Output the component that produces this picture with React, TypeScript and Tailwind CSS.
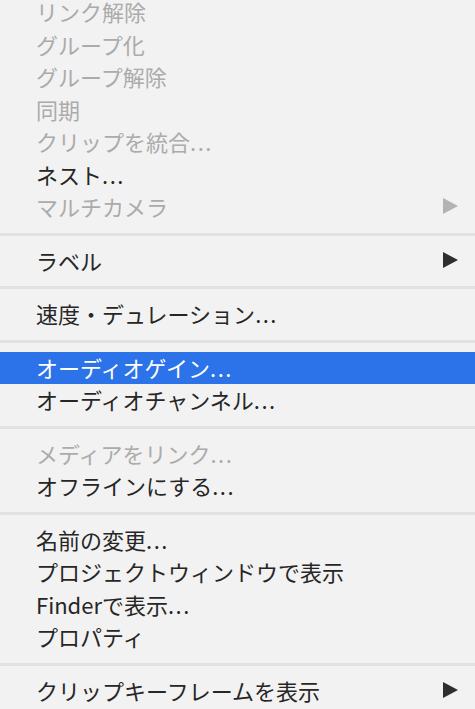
import React from "react";

type Item = { label: string; disabled?: boolean; sub?: boolean; active?: boolean };

const groups: Item[][] = [
  [
    { label: "リンク解除", disabled: true },
    { label: "グループ化", disabled: true },
    { label: "グループ解除", disabled: true },
    { label: "同期", disabled: true },
    { label: "クリップを統合...", disabled: true },
    { label: "ネスト..." },
    { label: "マルチカメラ", disabled: true, sub: true },
  ],
  [{ label: "ラベル", sub: true }],
  [{ label: "速度・デュレーション..." }],
  [{ label: "オーディオゲイン...", active: true }, { label: "オーディオチャンネル..." }],
  [{ label: "メディアをリンク...", disabled: true }, { label: "オフラインにする..." }],
  [
    { label: "名前の変更..." },
    { label: "プロジェクトウィンドウで表示" },
    { label: "Finderで表示..." },
    { label: "プロパティ" },
  ],
  [{ label: "クリップキーフレームを表示", sub: true }],
];

const Arrow = ({ color }: { color: string }) => (
  <svg width="15" height="16" viewBox="0 0 15 16">
    <polygon points="0,0 15,8 0,16" fill={color} />
  </svg>
);

// split trailing "..." so the dots can be spaced like the mac menu
const Label = ({ text }: { text: string }) => {
  if (!text.endsWith("...")) return <>{text}</>;
  return (
    <>
      {text.slice(0, -3)}
      <span className="tracking-[1.5px]">...</span>
    </>
  );
};

const Row = ({ item }: { item: Item }) => {
  const text = item.active
    ? "text-white"
    : item.disabled
      ? "text-[#ababab]"
      : "text-[#262626]";
  return (
    <div
      className={`flex h-[32.5px] items-center justify-between pb-[2px] pl-[36px] pr-[17px] ${
        item.active ? "bg-[#2c72e8]" : ""
      }`}
    >
      <span className={`text-[22px] leading-none whitespace-nowrap ${text}`}>
        <Label text={item.label} />
      </span>
      {item.sub && <Arrow color={item.disabled ? "#b3b3b3" : "#2e2e2e"} />}
    </div>
  );
};

export default function App() {
  return (
    <div
      className="h-[709px] w-[475px] overflow-hidden bg-[#f2f2f2]"
      style={{ fontFamily: '"Noto Sans CJK JP", "Noto Sans", sans-serif' }}
    >
      <div className="-mt-[13px]">
        {groups.map((g, i) => (
          <div key={i}>
            {i > 0 && <div className="h-[3px] bg-[#e2e2e2]" />}
            <div className="py-[9px]">
              {g.map((it) => (
                <Row key={it.label} item={it} />
              ))}
            </div>
          </div>
        ))}
      </div>
    </div>
  );
}
